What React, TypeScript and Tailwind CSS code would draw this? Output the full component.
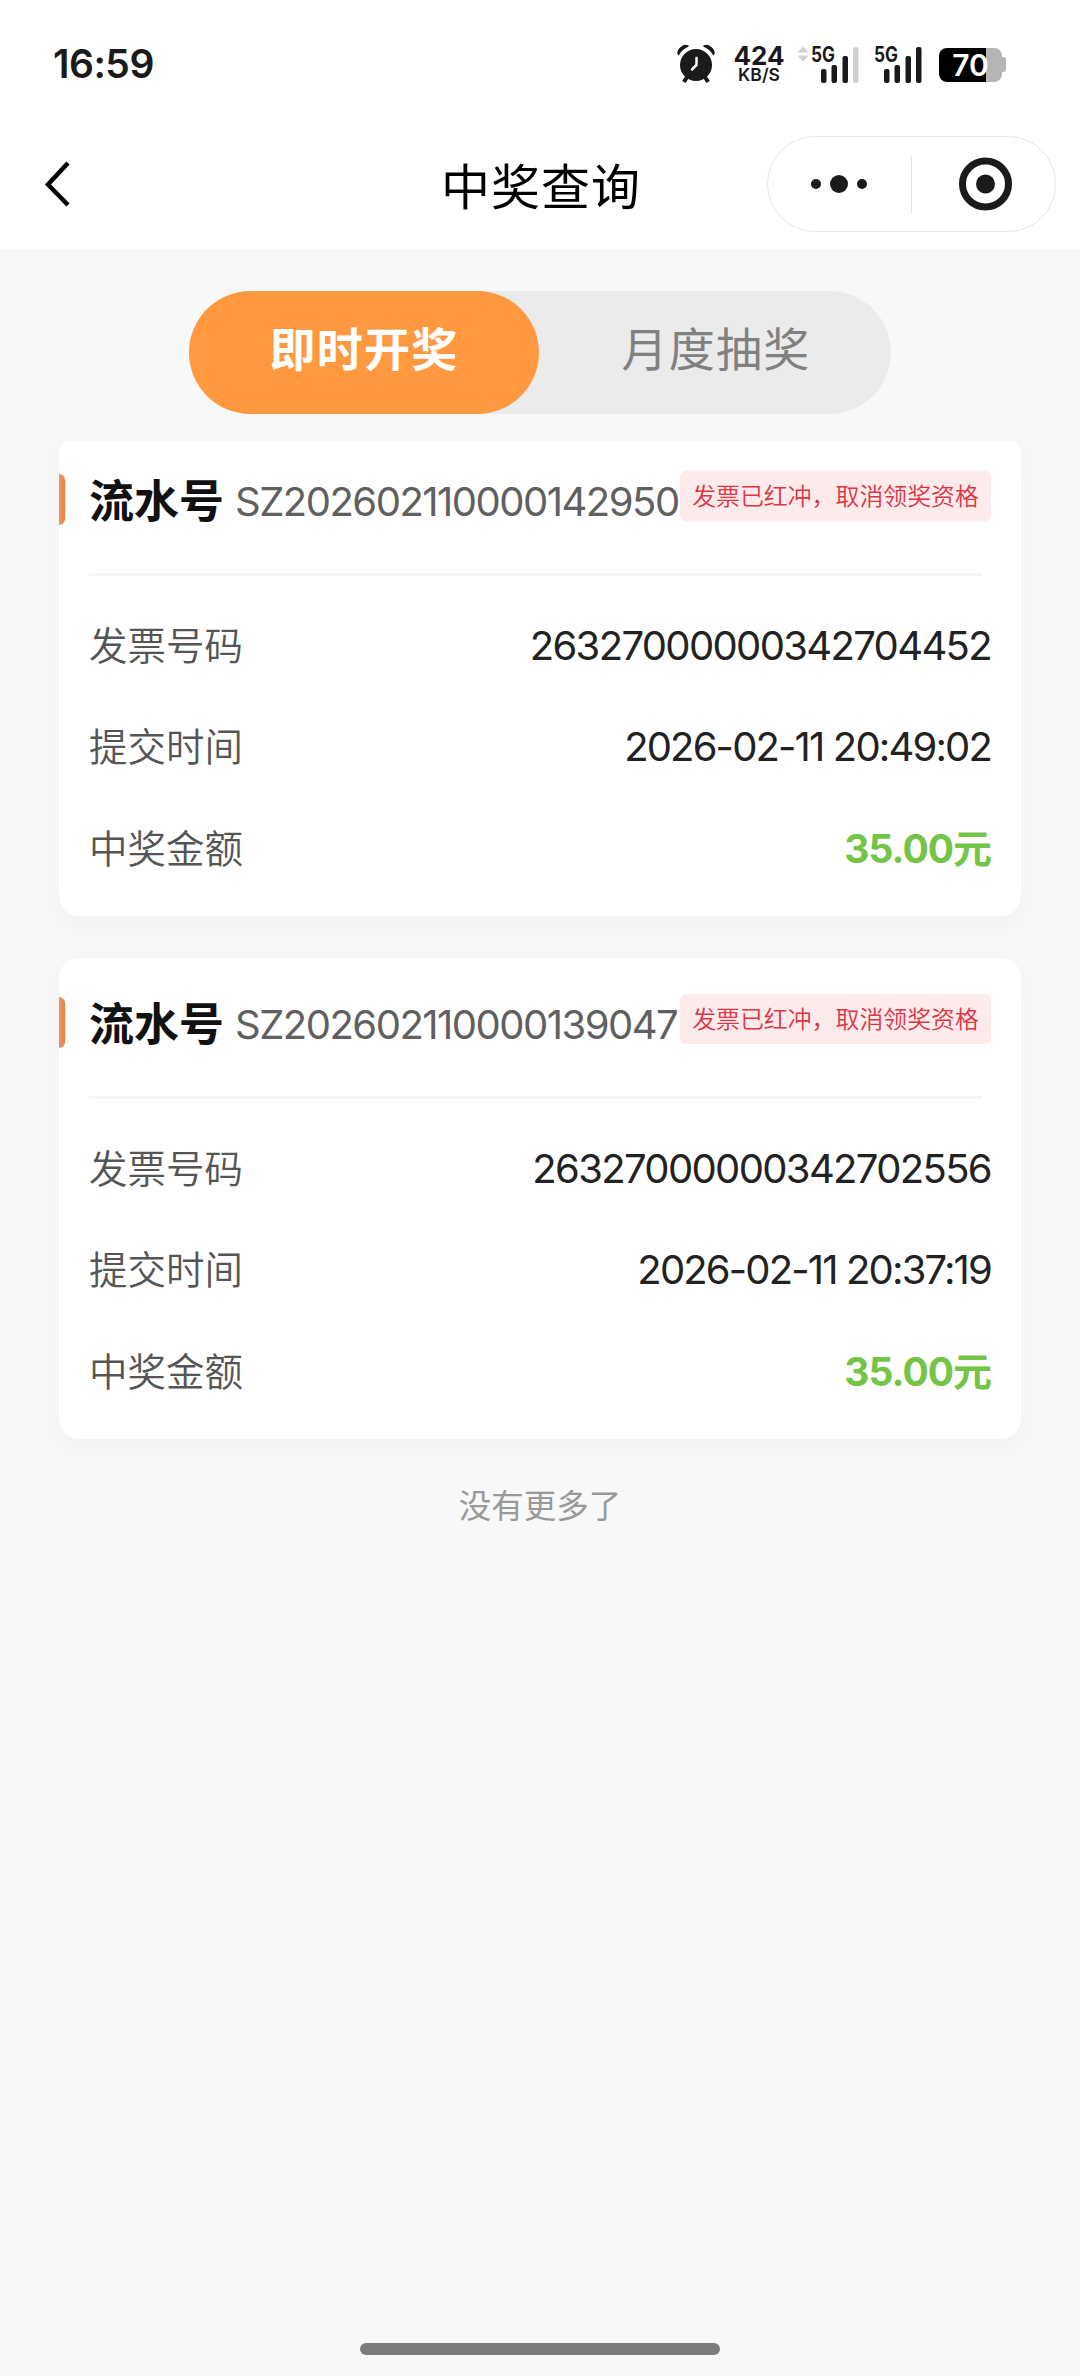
import React from 'react';

type TicketRecord = {
  serial: string;
  invoice: string;
  submittedAt: string;
  amount: string;
};

const records: TicketRecord[] = [
  {
    serial: 'SZ202602110000142950',
    invoice: '26327000000342704452',
    submittedAt: '2026-02-11 20:49:02',
    amount: '35.00元',
  },
  {
    serial: 'SZ202602110000139047',
    invoice: '26327000000342702556',
    submittedAt: '2026-02-11 20:37:19',
    amount: '35.00元',
  },
];

function AlarmIcon() {
  return (
    <svg width="38" height="40" viewBox="0 0 38 40" fill="none">
      <path d="M1.500 10.500A18 18 0 0 1 11 2Q8 .5 4 3.500Q0 7 1.500 10.500ZM36.500 10.500A18 18 0 0 0 27 2Q30 .5 34 3.500Q38 7 36.500 10.500Z" fill="#1a1a1a" stroke="#1a1a1a" strokeWidth="1.500" strokeLinejoin="round" />
      <path d="M10 33L7 38M28 33L31 38" stroke="#1a1a1a" strokeWidth="4" />
      <circle cx="19" cy="21" r="16" fill="#1a1a1a" />
      <path d="M19.500 14V21L15 25.500" stroke="#fff" strokeWidth="2.500" strokeLinecap="round" />
    </svg>
  );
}

function SignalIcon({ weak = false }: { weak?: boolean }) {
  return (
    <svg width="62" height="44" viewBox="0 -4 62 44">
      {weak && <path d="M5 1L9.500 6H.5ZM5 15L.5 10H9.500Z" fill="#d0d0d0" stroke="#d0d0d0" strokeLinejoin="round" />}
      <text x="13" y="16" fontFamily="Inter, sans-serif" fontSize="21" fontWeight="700" textLength="24" lengthAdjust="spacingAndGlyphs" fill="#1a1a1a">
        5G
      </text>
      <rect x="23" y="23" width="5.500" height="14" rx="2" fill="#1a1a1a" />
      <rect x="33.500" y="19" width="5.500" height="18" rx="2" fill="#1a1a1a" />
      <rect x="44.500" y="10" width="5.500" height="27" rx="2" fill="#1a1a1a" />
      <rect x="55" y="1" width="5.500" height="36" rx="2" fill={weak ? '#d0d0d0' : '#1a1a1a'} />
    </svg>
  );
}

function StatusBar() {
  return (
    <div className="flex h-[127px] items-center justify-between pl-[53px] pr-[74px] text-[#1a1a1a]">
      <span className="text-[39px] font-semibold leading-none tracking-[-0.5px]">16:59</span>
      <div className="flex items-center">
        <AlarmIcon />
        <div className="ml-[18px] mt-[2px] flex w-[52px] flex-col items-center">
          <span className="text-[26px] font-bold leading-[20px]">424</span>
          <span className="text-[17.500px] font-semibold leading-[18px]">KB/S</span>
        </div>
        <div className="ml-[13px]">
          <SignalIcon weak />
        </div>
        <div className="ml-px">
          <SignalIcon />
        </div>
        <div className="ml-[16px] mt-[2px] flex items-center">
          <div className="flex h-[34px] w-[63px] items-center justify-center rounded-[8px] bg-[linear-gradient(to_right,#000_47px,#b5b5b5_47px)]">
            <span className="text-[30px] font-semibold leading-none text-white">70</span>
          </div>
          <div className="h-[15px] w-[4px] rounded-r-[3px] bg-[#b5b5b5]" />
        </div>
      </div>
    </div>
  );
}

function NavBar() {
  return (
    <div className="flex h-[122px] items-start pl-[44px] pr-[24px] pt-[9px]">
      <svg className="mt-[25px]" width="30" height="46" viewBox="0 0 30 46" fill="none">
        <path d="M24 2L4 23.500L24 44" stroke="#000" strokeWidth="4.500" />
      </svg>
      <h1 className="ml-[367px] mt-[24px] text-[49px] leading-[56px] tracking-[1px] text-black">中奖查询</h1>
      <div className="ml-auto flex h-[96px] w-[289px] items-center rounded-full border border-[#e6e6e6]">
        <svg className="w-[143px]" height="20" viewBox="0 0 143 20" fill="#1a1a1a">
          <circle cx="48" cy="10" r="5" />
          <circle cx="71" cy="10" r="9" />
          <circle cx="94" cy="10" r="5" />
        </svg>
        <div className="h-[57px] w-px bg-[#e2e2e2]" />
        <svg className="w-[143px]" height="54" viewBox="0 0 143 54">
          <circle cx="73.500" cy="27" r="23" fill="none" stroke="#1a1a1a" strokeWidth="7" />
          <circle cx="73.500" cy="27" r="9.500" fill="#1a1a1a" />
        </svg>
      </div>
    </div>
  );
}

function Row({ label, children }: { label: string; children: React.ReactNode }) {
  return (
    <div className="flex h-[101.500px] items-center justify-between">
      <span className="pt-[2px] text-[38.500px] font-[350] text-[#555]">{label}</span>
      {children}
    </div>
  );
}

function RecordCard({ record }: { record: TicketRecord }) {
  return (
    <div className="h-[481px] rounded-[20px] bg-white pr-[30px] pt-[36px] shadow-[0_8px_24px_rgba(90,40,0,0.035)]">
      <div className="flex h-[64px] items-start whitespace-nowrap">
        <div className="mt-[3px] h-[51px] w-[6px] rounded-r-[6px] bg-gradient-to-r from-[#e49a6c] to-[#f5793b]" />
        <span className="ml-[24px] mt-[3px] w-[135px] text-[45px] font-bold leading-[56px] text-[#111]">流水号</span>
        <span className="ml-[11px] mt-[3px] w-[445px] text-[40px] leading-[56px] tracking-[-1.500px] text-[#606060]">
          {record.serial}
        </span>
        <span className="flex h-[50px] flex-1 items-center justify-center rounded-[6px] bg-[#fdeaea] pt-[2px] text-[23.900px] font-[350] text-[#dc3545]">
          发票已红冲，取消领奖资格
        </span>
      </div>
      <div className="ml-[30px] mr-[9px] mt-[38px] h-[3px] bg-[#f5f5f5]" />
      <div className="ml-[30px] mt-[19px]">
        <Row label="发票号码">
          <span className="text-[40px] tracking-[-1.650px] text-[#222]">{record.invoice}</span>
        </Row>
        <Row label="提交时间">
          <span className="text-[40px] tracking-[-1.850px] text-[#222]">{record.submittedAt}</span>
        </Row>
        <Row label="中奖金额">
          <span className="text-[39px] font-bold tracking-[-1px] text-[#74c447]">{record.amount}</span>
        </Row>
      </div>
    </div>
  );
}

export default function App() {
  return (
    <div className="flex h-[2376px] w-[1080px] flex-col bg-[#f8f8f8] font-['Inter','Noto_Sans_CJK_SC',sans-serif]">
      <header className="bg-white">
        <StatusBar />
        <NavBar />
      </header>

      {/* Tabs */}
      <div className="mx-auto mt-[42px] flex h-[123px] w-[702px] rounded-full bg-[#ebebeb] text-[46px] tracking-[1.300px]">
        <button className="flex-1 rounded-full bg-[#ff983f] pb-[6px] font-bold text-white">即时开奖</button>
        <button className="flex-1 pb-[6px] pl-[2px] text-[#808080]">月度抽奖</button>
      </div>

      {/* List, scrolled by a few pixels */}
      <main className="mt-[27px] flex-1 overflow-hidden px-[59px]">
        <div className="-mt-[6px] flex flex-col gap-[42px]">
          {records.map((record) => (
            <RecordCard key={record.serial} record={record} />
          ))}
        </div>
        <p className="mt-[44px] text-center text-[32.500px] leading-[48px] text-[#999]">没有更多了</p>
      </main>

      <div className="mx-auto mb-[21px] h-[12px] w-[360px] rounded-full bg-[#7c7c7c]" />
    </div>
  );
}
